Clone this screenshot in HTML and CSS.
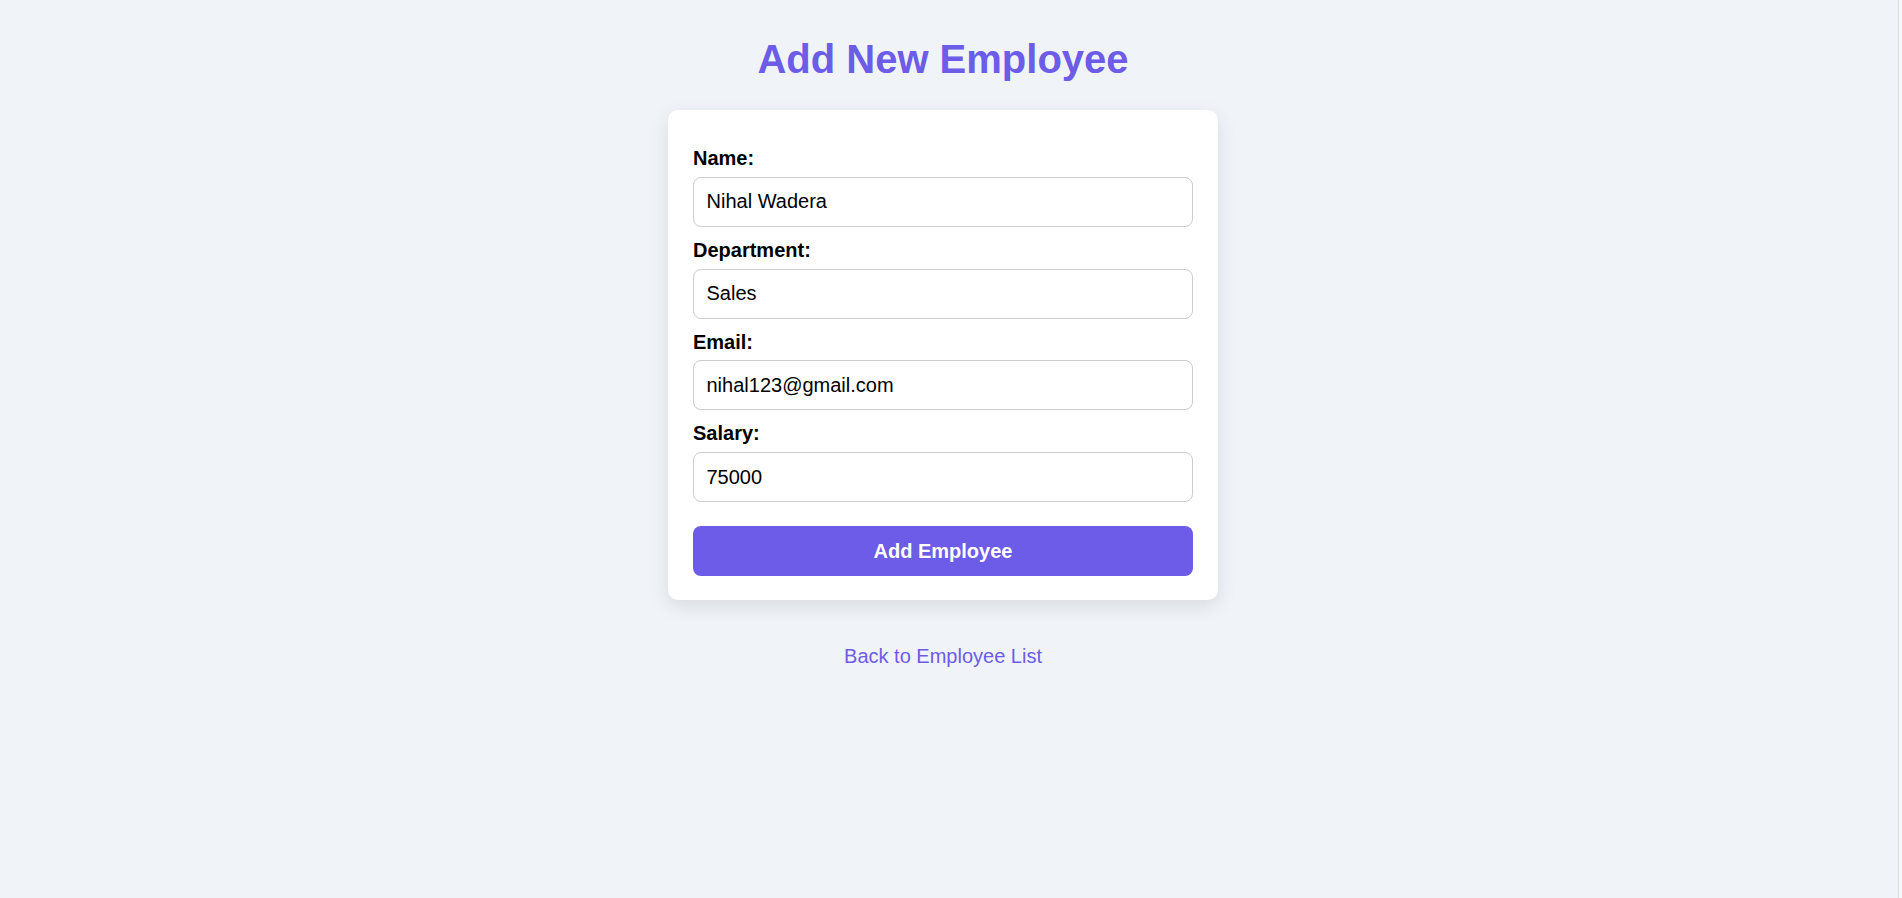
FILE: index.html
```html
<!DOCTYPE html>
<html lang="en">
<head>
    <meta charset="UTF-8">
    <meta name="viewport" content="width=device-width, initial-scale=1.0">
    <title>Add New Employee</title>
    <link rel="stylesheet" href="styles.css">
</head>
<body>
    <div class="page">
        <h1>Add New Employee</h1>

        <form class="employee-form">
            <label for="name">Name:</label>
            <input type="text" id="name" value="Nihal Wadera">

            <label for="department">Department:</label>
            <input type="text" id="department" value="Sales">

            <label for="email">Email:</label>
            <input type="email" id="email" value="nihal123@gmail.com">

            <label for="salary">Salary:</label>
            <input type="number" id="salary" value="75000">

            <button type="button">Add Employee</button>
        </form>

        <a class="back-link" href="#">Back to Employee List</a>
    </div>
</body>
</html>
```

FILE: styles.css
```css
html {
    background-color: #f6f7f9;
}

body {
    margin: 0;
    font-family: "Liberation Sans", Arial, sans-serif;
    background-color: #f6f7f9;
}

.page {
    box-sizing: border-box;
    width: 1899px;
    min-height: 100vh;
    padding: 36px 12px 0 0;
    border-right: 1px solid #dcdfe4;
    background-color: #f0f3f8;
    display: flex;
    flex-direction: column;
    align-items: center;
}

h1 {
    margin: 0 0 28px;
    font-size: 40px;
    line-height: 46px;
    color: #6c5ce7;
}

.employee-form {
    box-sizing: border-box;
    width: 550px;
    padding: 25px 25px 24px;
    background-color: #fff;
    border-radius: 10px;
    box-shadow: 0 6px 19px rgba(0, 0, 0, 0.1);
    display: flex;
    flex-direction: column;
}

label {
    display: block;
    margin: 12px 0 6.75px;
    font-size: 20px;
    line-height: 23px;
    font-weight: bold;
    color: #000;
}

input {
    box-sizing: border-box;
    width: 100%;
    height: 50px;
    padding: 0 12.5px;
    border: 1.25px solid #ccc;
    border-radius: 8px;
    font-family: inherit;
    font-size: 20px;
    color: #000;
    background-color: #fff;
    outline: none;
}

input[type="number"] {
    -moz-appearance: textfield;
}

input[type="number"]::-webkit-inner-spin-button,
input[type="number"]::-webkit-outer-spin-button {
    -webkit-appearance: none;
    margin: 0;
}

button {
    margin-top: 24px;
    height: 50px;
    border: none;
    border-radius: 8px;
    background-color: #6c5ce7;
    color: #fff;
    font-family: inherit;
    font-size: 20px;
    font-weight: bold;
    cursor: pointer;
}

.back-link {
    margin-top: 45px;
    font-size: 20px;
    line-height: 23px;
    color: #6c5ce7;
    text-decoration: none;
}
```
